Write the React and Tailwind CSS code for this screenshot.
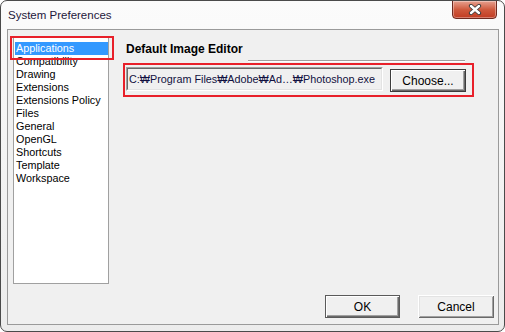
import React from "react";

const items = [
  "Applications",
  "Compatibility",
  "Drawing",
  "Extensions",
  "Extensions Policy",
  "Files",
  "General",
  "OpenGL",
  "Shortcuts",
  "Template",
  "Workspace",
];

function CloseIcon() {
  return (
    <svg width="14" height="11" viewBox="0 0 14 11">
      <path d="M3 2 L11 9 M11 2 L3 9" stroke="#3b3b3b" strokeWidth="4.2" strokeLinecap="round" fill="none" />
      <path d="M3 2 L11 9 M11 2 L3 9" stroke="#ffffff" strokeWidth="2.4" strokeLinecap="round" fill="none" />
    </svg>
  );
}

export default function App() {
  const font = { fontFamily: '"Liberation Sans", Arial, "DejaVu Sans", sans-serif' };
  return (
    <div
      className="relative w-[505px] h-[332px] overflow-hidden rounded-[7px] border border-[#4a4a4a] bg-gradient-to-b from-[#fbfbfb] to-[#ececec] flex flex-col"
      style={font}
    >
      {/* Title bar */}
      <div className="h-[28px] flex items-start justify-between pl-[7px] pr-[7px] shrink-0">
        <div className="pt-[7px] text-[11.5px] leading-[14px] text-[#24173a]">System Preferences</div>
        <div className="w-[45px] h-[19px] -mt-[1px] rounded-b-[4px] border border-[#6e2a20] bg-gradient-to-b from-[#e6a08f] via-[#cf5a3e] to-[#c13b22] flex items-center justify-center shadow-[inset_0_0_0_1px_rgba(255,255,255,0.35)]">
          <CloseIcon />
        </div>
      </div>

      {/* Client area */}
      <div className="relative ml-[6px] w-[492px] h-[296px] border border-[#9a9a9a] bg-[#f0f0f0] flex flex-col">
        <div className="flex pt-[7px] pl-[5px]">
          {/* List box */}
          <div className="w-[96px] h-[247px] border border-[#a0a0a0] bg-white pt-[4px] pl-[1px] shrink-0">
            {items.map((it, i) => (
              <div
                key={it}
                className={
                  "h-[13px] leading-[13px] text-[10.8px] pl-[1px] whitespace-nowrap " +
                  (i === 0 ? "bg-[#3399ff] text-white" : "text-black")
                }
              >
                {it}
              </div>
            ))}
          </div>

          {/* Right panel */}
          <div className="ml-[17px] flex flex-col">
            <div className="mt-[5px] h-[14px] leading-[14px] text-[12px] font-bold text-black">Default Image Editor</div>
            <div className="mt-[4px] ml-[122px] w-[217px] h-[2px] border-t border-[#a0a0a0] border-b border-b-white" />
            <div className="mt-[5px] flex items-start">
              <div className="w-[257px] h-[24px] border border-t-[#a0a0a0] border-l-[#a0a0a0] border-r-white border-b-white">
                <div className="w-full h-full border border-t-[#696969] border-l-[#696969] border-r-[#e3e3e3] border-b-[#e3e3e3] bg-[#f0f0f0] pl-[1px] text-[10.8px] leading-[20px] text-[#101040] whitespace-nowrap overflow-hidden">
                  C:₩Program Files₩Adobe₩Ad…₩Photoshop.exe
                </div>
              </div>
              <div className="ml-[7px] mt-[2px] w-[76px] h-[23px] border border-[#3c3c3c] bg-[#f0f0f0] shadow-[inset_1px_1px_0_#ffffff,inset_-1px_-1px_0_#696969,inset_-2px_-2px_0_#a0a0a0] flex items-center justify-center text-[12px] text-black">
                Choose...
              </div>
            </div>
          </div>
        </div>

        {/* Bottom buttons */}
        <div className="mt-auto mb-[6px] mr-[4px] flex justify-end gap-[18px]">
          <div className="w-[75px] h-[23px] border border-[#5a5a5a] bg-[#f0f0f0] shadow-[inset_1px_1px_0_#ffffff,inset_-1px_-1px_0_#696969,inset_-2px_-2px_0_#a0a0a0] flex items-center justify-center text-[12px] text-black">
            OK
          </div>
          <div className="w-[76px] h-[23px] bg-[#f0f0f0] shadow-[inset_1px_1px_0_#ffffff,inset_-1px_-1px_0_#696969,inset_2px_2px_0_#e3e3e3,inset_-2px_-2px_0_#a0a0a0] flex items-center justify-center text-[12px] text-black">
            Cancel
          </div>
        </div>

        {/* Red annotation rectangles (overlays) */}
        <div className="absolute left-[2px] top-[6px] w-[104px] h-[24px] border-2 border-[#e8202a] pointer-events-none" />
        <div className="absolute left-[115px] top-[33px] w-[351px] h-[34px] border-2 border-[#e8202a] pointer-events-none" />
      </div>
    </div>
  );
}
